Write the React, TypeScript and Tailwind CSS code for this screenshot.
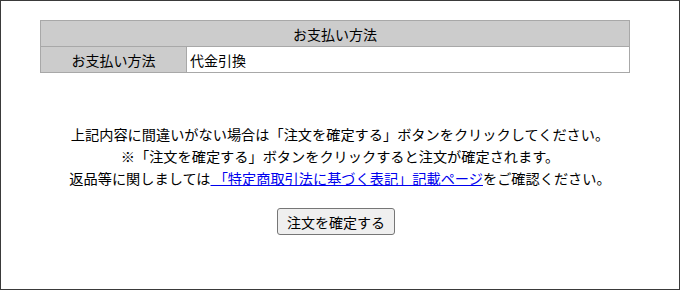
const font = "font-['Hiragino_Sans','Noto_Sans_CJK_JP',sans-serif]";

export default function App() {
  return (
    <div className={`h-[290px] w-[680px] border border-[#3a3a3a] bg-white text-[14px] text-black ${font}`}>
      <div className="pl-[39px] pt-[19px]">
        <table className="w-[590px] border-collapse border border-[#9e9e9e]">
          <tbody>
            <tr className="h-[26px] bg-[#cccccc]">
              <th colSpan={2} className="border border-[#a8a8a8] p-0 text-center font-normal leading-none">
                お支払い方法
              </th>
            </tr>
            <tr className="h-[26px]">
              <td className="w-[146px] border border-[#a8a8a8] bg-[#cccccc] p-0 text-center leading-none">
                お支払い方法
              </td>
              <td className="border border-[#a8a8a8] bg-white py-0 pl-[3px] leading-none">代金引換</td>
            </tr>
          </tbody>
        </table>
      </div>

      <div className="mt-[50px] text-center text-[14.2px] leading-[22px]">
        <p className="h-[22px]">上記内容に間違いがない場合は「注文を確定する」ボタンをクリックしてください。</p>
        <p className="h-[22px]">※「注文を確定する」ボタンをクリックすると注文が確定されます。</p>
        <p className="h-[22px]">
          返品等に関しましては
          <a href="#" className="text-[#0000ee] underline">
            &nbsp;「特定商取引法に基づく表記」記載ページ
          </a>
          をご確認ください。
        </p>
      </div>

      <div className="mt-[19px] flex justify-center">
        <button className="mr-[8px] h-[27px] rounded-[3px] border border-[#767676] bg-[#efefef] px-[9px] text-[14px] leading-none text-black">
          注文を確定する
        </button>
      </div>
    </div>
  );
}
